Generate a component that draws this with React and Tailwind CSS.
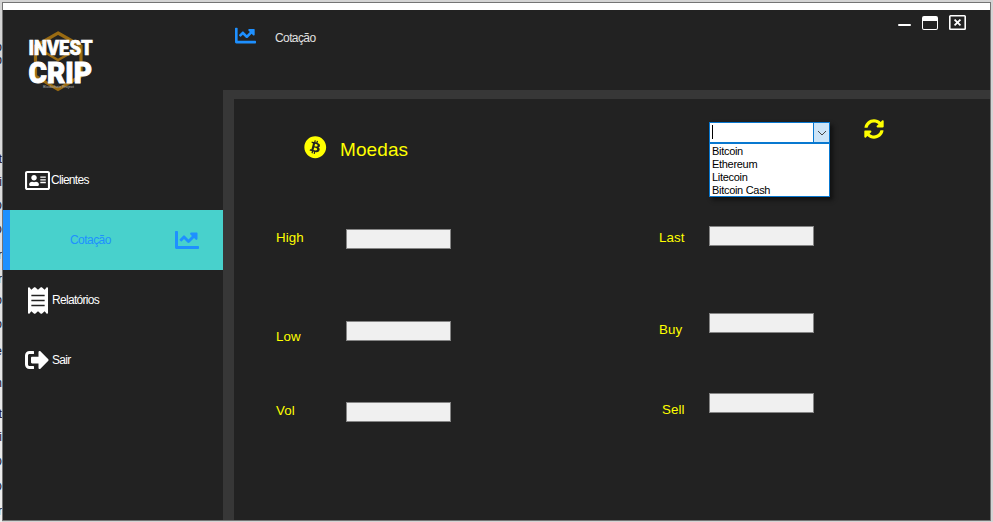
import {
  FaBitcoin,
  FaChartLine,
  FaReceipt,
  FaRegAddressCard,
  FaRegWindowClose,
  FaSignOutAlt,
  FaSyncAlt,
} from "react-icons/fa";

const coins = ["Bitcoin", "Ethereum", "Litecoin", "Bitcoin Cash"];

// Letters of the page behind the window: [glyph, row height]
const behind = [
  ["o", 13], ["p", 99], ["t", 23], ["i", 24], ["D", 24], ["D", 25], ["r", 24],
  ["r", 21], ["o", 24], ["o", 27], ["e", 32], ["n", 31], ["t", 23], ["i", 25],
  ["D", 25], ["D", 24], ["r", 16],
];

function Logo() {
  return (
    <svg className="mt-[18px] ml-[23px] h-[66px] w-[70px] shrink-0" viewBox="26 28 70 66">
      <g fill="none" stroke="#9a6b12" strokeWidth="3.200">
        <path d="M58 33 L81 46 V76 L58 89.500 L35.500 76 V46 Z" />
        <path d="M36 47 L58 60 L81 47" strokeWidth="2.500" />
      </g>
      <g fill="#fff" stroke="#fff" fontFamily="Roboto, 'Liberation Sans', sans-serif" fontWeight="900">
        <text x="28.500" y="55" fontSize="19.500" strokeWidth=".7" textLength="64" lengthAdjust="spacingAndGlyphs">INVEST</text>
        <text x="28.500" y="82.800" fontSize="30" strokeWidth="1" textLength="63.500" lengthAdjust="spacingAndGlyphs">CRIP</text>
      </g>
      <text x="43" y="88" fontSize="4" fill="#aaa" fontFamily="Roboto, sans-serif" textLength="31" lengthAdjust="spacingAndGlyphs">Blockchain Project</text>
    </svg>
  );
}

function Sidebar() {
  return (
    <aside className="flex w-[220px] shrink-0 flex-col text-white">
      <Logo />
      <nav className="mt-[56px] flex flex-col tracking-[-0.7px]">
        <div className="flex h-[60px] items-center pl-[22px]">
          <FaRegAddressCard className="h-[19px] w-[25px]" preserveAspectRatio="none" viewBox="0 32 576 448" />
          <span className="ml-[1px]">Clientes</span>
        </div>
        <div className="flex h-[60px] items-center bg-[#48d1cc] text-[#1e90ff]">
          <span className="h-full w-[7px] bg-[#1e90ff]" />
          <span className="ml-[60px] w-[105px] tracking-[-0.55px]">Cotação</span>
          <FaChartLine className="size-[24px]" />
        </div>
        <div className="flex h-[60px] items-center pl-[25px]">
          <FaReceipt className="h-[27px] w-[20px]" />
          <span className="ml-[4px]">Relatórios</span>
        </div>
        <div className="flex h-[60px] items-center pl-[22px]">
          <FaSignOutAlt className="size-[24px]" />
          <span className="ml-[3px]">Sair</span>
        </div>
      </nav>
    </aside>
  );
}

function Header() {
  return (
    <header className="flex h-[80px] items-start text-[#e0e0e0]">
      <FaChartLine className="mt-[15px] ml-[12px] size-[21px] text-[#1e90ff]" />
      <span className="mt-[20px] ml-[19px] tracking-[-0.6px]">Cotação</span>
      <div className="mt-[5px] mr-[24px] ml-auto flex items-start text-white">
        <span className="mt-[9px] mr-[11px] h-[2px] w-[13px] rounded-full bg-white" />
        <span className="mt-[1px] mr-[11px] h-[14px] w-[16px] rounded-[2px] border border-t-[5px] border-white" />
        <FaRegWindowClose className="h-[15px] w-[17px]" viewBox="0 32 512 448" preserveAspectRatio="none" />
      </div>
    </header>
  );
}

const Box = () => <div className="h-[20px] w-[105px] border border-[#858585] bg-[#f0f0f0]" />;

function Combo() {
  return (
    <div className="w-[121px] shadow-[3px_3px_4px_#111]">
      <div className="flex h-[21px] border border-[#0878d0] bg-white">
        <span className="mt-[2px] ml-[2px] h-[14px] w-px bg-black" />
        <span className="ml-auto flex w-[16px] items-center justify-center border-l border-[#0878d0] bg-[#cce4f7]">
          <svg className="h-[6px] w-[10px]" viewBox="0 0 10 6" fill="none" stroke="#444"><path d="M1 1 L5 5 L9 1" /></svg>
        </span>
      </div>
      <ul className="h-[54px] border border-[#0878d0] bg-white pt-px pl-[2px] text-[11px] leading-[13px] tracking-[-0.3px] text-black">
        {coins.map((c) => <li key={c}>{c}</li>)}
      </ul>
    </div>
  );
}

function Content() {
  return (
    <main className="flex flex-1 border-t-[9px] border-l-[11px] border-[#373737] text-[13.333px] leading-[16px] tracking-[0.1px] text-[#ffff00]">
      <section className="w-[425px] pl-[42px]">
        <div className="flex h-[130px] items-start pl-[28px]">
          <FaBitcoin className="mt-[37px] size-[22.500px]" />
          <span className="mt-[39px] ml-[13.500px] text-[19px] leading-[24px]">Moedas</span>
        </div>
        <div className="flex h-[92px] items-start"><span className="w-[70px] pt-px">High</span><Box /></div>
        <div className="flex h-[81px] items-start"><span className="w-[70px] pt-[8px]">Low</span><Box /></div>
        <div className="flex items-start"><span className="w-[70px] pt-px">Vol</span><Box /></div>
      </section>
      <section className="flex-1">
        <div className="flex h-[127px] items-start pt-[23px] pl-[50px]">
          <Combo />
          <FaSyncAlt className="-mt-[3px] ml-[34px] size-[20px]" />
        </div>
        <div className="flex h-[87px] items-start"><span className="w-[50px] pt-[4px]">Last</span><Box /></div>
        <div className="flex h-[80px] items-start"><span className="w-[50px] pt-[9px]">Buy</span><Box /></div>
        <div className="flex items-start"><span className="w-[50px] pt-[9px] pl-[3px]">Sell</span><Box /></div>
      </section>
    </main>
  );
}

export default function App() {
  return (
    <div className="flex h-[522px] w-[993px] overflow-hidden bg-[#d4d4d4] pt-[2px] font-['Liberation_Sans',Arial,sans-serif] text-[12px] leading-[16px]">
      <div className="flex w-[2px] shrink-0 flex-col items-end overflow-hidden bg-gradient-to-b from-[#d4d4d4] to-[#eee] pt-[37px] text-[#15152a]">
        {behind.map(([c, h], i) => <span key={i} className="shrink-0" style={{ height: h }}>{c}</span>)}
      </div>
      <div className="flex h-[519px] w-[989px] flex-col border border-[#747474] bg-[#222]">
        <div className="h-[7px] shrink-0 bg-white" />
        <div className="flex min-h-0 flex-1">
          <Sidebar />
          <div className="flex min-w-0 flex-1 flex-col">
            <Header />
            <Content />
          </div>
        </div>
      </div>
    </div>
  );
}
